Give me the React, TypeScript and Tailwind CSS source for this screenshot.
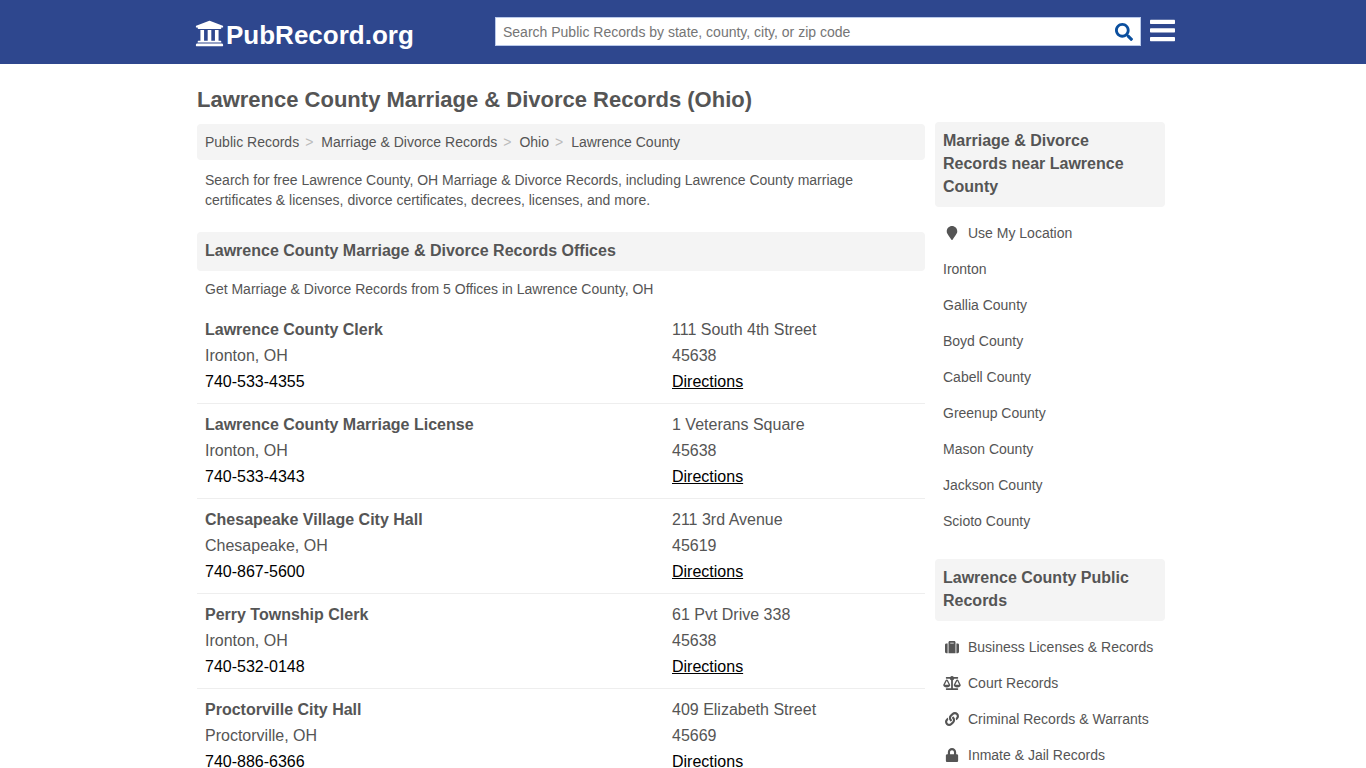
import type { ReactNode } from "react";
import type { IconType } from "react-icons";
import {
  FaBalanceScale,
  FaLink,
  FaLock,
  FaMapMarker,
  FaSearch,
  FaSuitcase,
  FaUniversity,
} from "react-icons/fa";

type Office = {
  name: string;
  city: string;
  phone: string;
  street: string;
  zip: string;
};

type SideLink = {
  label: string;
  icon?: IconType;
};

const crumbs = ["Public Records", "Marriage & Divorce Records", "Ohio", "Lawrence County"];

const offices: Office[] = [
  { name: "Lawrence County Clerk", city: "Ironton, OH", phone: "740-533-4355", street: "111 South 4th Street", zip: "45638" },
  { name: "Lawrence County Marriage License", city: "Ironton, OH", phone: "740-533-4343", street: "1 Veterans Square", zip: "45638" },
  { name: "Chesapeake Village City Hall", city: "Chesapeake, OH", phone: "740-867-5600", street: "211 3rd Avenue", zip: "45619" },
  { name: "Perry Township Clerk", city: "Ironton, OH", phone: "740-532-0148", street: "61 Pvt Drive 338", zip: "45638" },
  { name: "Proctorville City Hall", city: "Proctorville, OH", phone: "740-886-6366", street: "409 Elizabeth Street", zip: "45669" },
];

const nearbyLinks: SideLink[] = [
  { label: "Use My Location", icon: FaMapMarker },
  { label: "Ironton" },
  { label: "Gallia County" },
  { label: "Boyd County" },
  { label: "Cabell County" },
  { label: "Greenup County" },
  { label: "Mason County" },
  { label: "Jackson County" },
  { label: "Scioto County" },
];

const recordLinks: SideLink[] = [
  { label: "Business Licenses & Records", icon: FaSuitcase },
  { label: "Court Records", icon: FaBalanceScale },
  { label: "Criminal Records & Warrants", icon: FaLink },
  { label: "Inmate & Jail Records", icon: FaLock },
];

function Header() {
  return (
    <header className="bg-[#2e478e]">
      <div className="mx-auto flex h-16 max-w-[984px] items-start justify-between pl-1">
        <a href="#" className="mt-5 flex h-[30px] items-center gap-[2px] text-[26px] leading-[30px] font-bold text-white">
          <FaUniversity className="mb-[3px] size-[29px]" aria-hidden="true" />
          PubRecord.org
        </a>
        <div className="mt-[17px] flex gap-[9px]">
          <form role="search" className="flex h-[29px] w-[646px] items-center border border-[#b9c9ea] bg-white">
            <input
              type="text"
              aria-label="Search Public Records"
              placeholder="Search Public Records by state, county, city, or zip code"
              className="min-w-0 flex-1 px-[7px] text-sm text-[#555] outline-none placeholder:text-[#757575]"
            />
            <button type="submit" aria-label="Search" className="px-[7px] text-[#0b4f9e]">
              <FaSearch className="size-[18px]" />
            </button>
          </form>
          <button type="button" aria-label="Menu" className="mt-[2px] h-[23px] text-white">
            <svg width="25" height="23" viewBox="0 0 25 23" fill="currentColor" aria-hidden="true">
              <rect x="0" y="0.8" width="25" height="4.2" rx="0.7" />
              <rect x="0" y="9.3" width="25" height="4.2" rx="0.7" />
              <rect x="0" y="18" width="25" height="4.2" rx="0.7" />
            </svg>
          </button>
        </div>
      </div>
    </header>
  );
}

function SectionHeading({ children }: { children: ReactNode }) {
  return (
    <h2 className="rounded-sm bg-[#f4f4f4] px-2 pt-[7px] pb-[9px] text-base leading-[23px] font-bold">
      {children}
    </h2>
  );
}

function OfficeRow({ office }: { office: Office }) {
  return (
    <li className="grid grid-cols-[1fr_245px] border-b border-[#eee] p-2 leading-[26px]">
      <div>
        <h3 className="font-bold">{office.name}</h3>
        <p>{office.city}</p>
        <a href={`tel:${office.phone}`} className="block text-black">
          {office.phone}
        </a>
      </div>
      <div>
        <p>{office.street}</p>
        <p>{office.zip}</p>
        <a href="#" className="text-black underline">
          Directions
        </a>
      </div>
    </li>
  );
}

function SideLinks({ links }: { links: SideLink[] }) {
  return (
    <ul className="pt-2 text-sm">
      {links.map(({ label, icon: Icon }) => (
        <li key={label}>
          <a href="#" className="flex h-9 items-center px-2">
            {Icon ? <Icon className="mr-[7px] h-[14px] w-[18px] shrink-0" aria-hidden="true" /> : null}
            {label}
          </a>
        </li>
      ))}
    </ul>
  );
}

export default function App() {
  return (
    <div className="min-h-screen bg-white font-['Liberation_Sans',Arial,sans-serif] text-[#555]">
      <Header />
      <div className="mx-auto flex max-w-[984px] gap-[10px] pr-[10px] pl-[6px]">
        <main className="min-w-0 flex-1 pt-[21px]">
          <h1 className="text-[22px] leading-[30px] font-bold">
            Lawrence County Marriage &amp; Divorce Records (Ohio)
          </h1>
          <nav aria-label="Breadcrumb" className="mt-[9px] rounded-sm bg-[#f4f4f4] p-2 text-sm">
            <ol className="flex">
              {crumbs.map((crumb, index) => (
                <li key={crumb}>
                  <a href="#">{crumb}</a>
                  {index < crumbs.length - 1 ? (
                    <span className="mr-2 ml-[6px] text-[#bbb]">&gt;</span>
                  ) : null}
                </li>
              ))}
            </ol>
          </nav>
          <p className="mt-[10px] mb-[22px] px-2 text-sm">
            Search for free Lawrence County, OH Marriage &amp; Divorce Records, including Lawrence County marriage
            certificates &amp; licenses, divorce certificates, decrees, licenses, and more.
          </p>
          <SectionHeading>Lawrence County Marriage &amp; Divorce Records Offices</SectionHeading>
          <p className="mt-2 mb-[10px] px-2 text-sm">
            Get Marriage &amp; Divorce Records from 5 Offices in Lawrence County, OH
          </p>
          <ul>
            {offices.map((office) => (
              <OfficeRow key={office.name} office={office} />
            ))}
          </ul>
        </main>
        <aside className="flex w-[230px] shrink-0 flex-col gap-5 pt-[58px]">
          <section>
            <SectionHeading>Marriage &amp; Divorce Records near Lawrence County</SectionHeading>
            <SideLinks links={nearbyLinks} />
          </section>
          <section>
            <SectionHeading>Lawrence County Public Records</SectionHeading>
            <SideLinks links={recordLinks} />
          </section>
        </aside>
      </div>
    </div>
  );
}
